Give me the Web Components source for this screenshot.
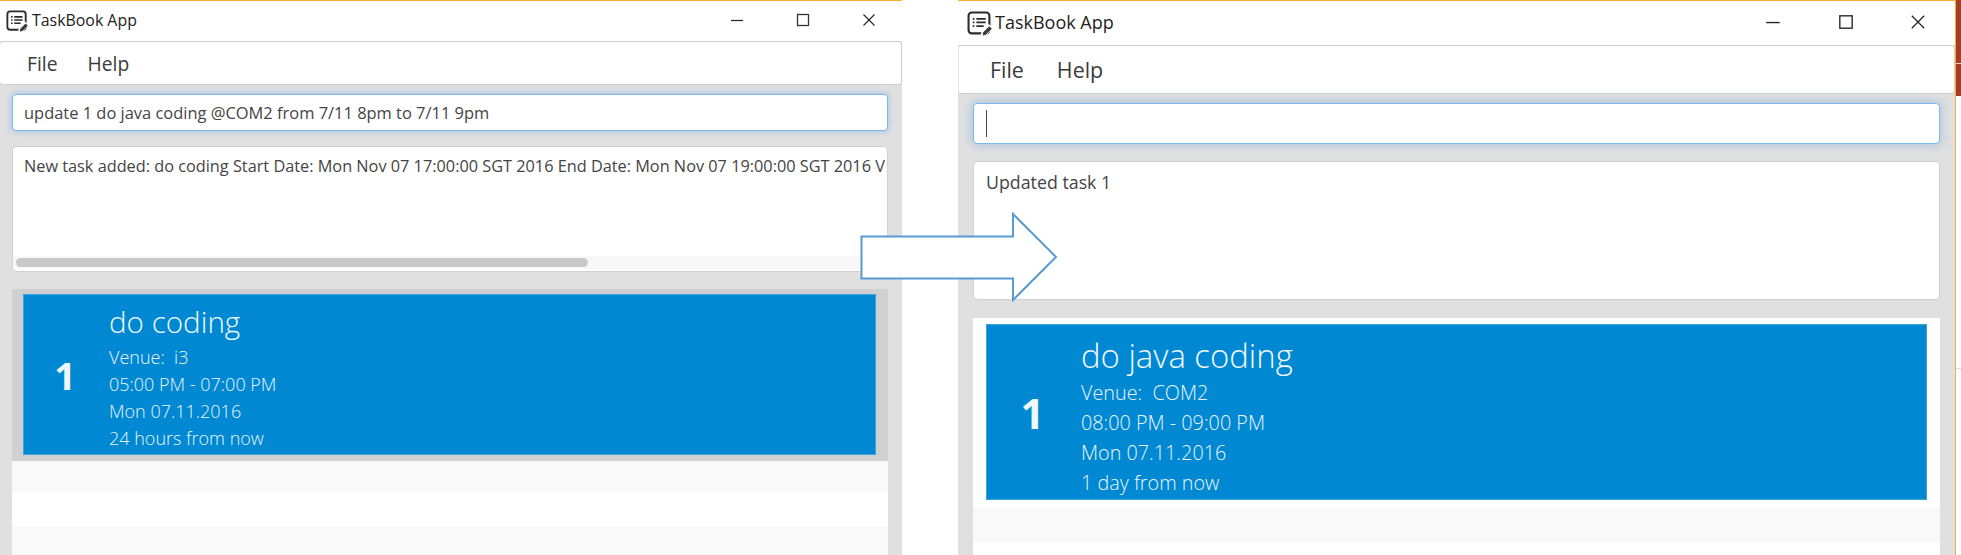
<!DOCTYPE html>
<html>
<head>
<meta charset="utf-8">
<title>TaskBook App</title>
<style>
    html, body { margin: 0; height: 100%; background: #fff; overflow: hidden; }
    body { font-family: "Open Sans", "Noto Sans", sans-serif; }
    #stage { display: flex; gap: 56px; width: 1961px; height: 555px; }
    #stage wood-strip { margin-left: -56px; }
</style>
</head>
<body>

<template id="window-tpl">
    <style>
        :host {
            display: flex;
            flex-direction: column;
            flex: none;
            width: 902px;
            height: 555px;
            box-sizing: border-box;
            border-top: 1px solid #f5ad33;
            background: #e0e0e0;
            color: #3a3a3a;
            --pad: 12px;
            --title-h: 40px;
            --menu-h: 44px;
            overflow: hidden;
        }
        :host([large]) {
            width: 998px;
            --pad: 15px;
            --title-h: 44px;
            --menu-h: 49px;
            border-right: 1px solid #f5ad33;
        }
        .title {
            height: var(--title-h);
            flex: none;
            background: #fff;
            display: flex;
            align-items: center;
            padding-left: 6px;
            color: #222;
            font-size: 15.9px;
        }
        :host([large]) .title { padding-left: 9px; font-size: 18px; }
        .title svg.logo { width: 22px; height: 22px; margin-right: 4px; flex: none; }
        :host([large]) .title svg.logo { width: 25px; height: 25px; margin-right: 3px; }
        .title .name { flex: 1; padding-bottom: 2px; }
        .controls { display: flex; align-items: center; gap: 50px; padding-right: 25px; margin-bottom: 2px; }
        .controls svg { display: block; width: 16px; height: 16px; }
        :host([large]) .controls { gap: 54.5px; padding-right: 28px; }
        :host([large]) .controls svg { width: 18px; height: 18px; }
        .menu {
            height: var(--menu-h);
            flex: none;
            box-sizing: border-box;
            background: #fff;
            border: 1px solid #cfcfcf;
            border-left: 0;
            border-radius: 4px;
            display: flex;
            align-items: center;
            gap: 30px;
            padding-left: 27px;
            font-size: 19.3px;
        }
        :host([large]) .menu { padding-left: 31px; gap: 33px; font-size: 21.4px; border-left: 1px solid #e4e4e4; }
        .body {
            flex: 1;
            min-height: 0;
            display: flex;
            flex-direction: column;
            padding: 9px 14px 0 var(--pad);
        }
        :host([large]) .body { padding-right: 15px; }
    </style>
    <div class="title">
        <svg class="logo" viewBox="0 0 24 24" fill="none">
            <rect x="1.5" y="1.5" width="20" height="20" rx="3" stroke="#2b2b2b" stroke-width="2"/>
            <path d="M5.5 7.5h1.6M5.5 11h1.6M5.5 14.5h1.6M9 7.5h9M9 11h9M9 14.5h7" stroke="#2b2b2b" stroke-width="1.7"/>
            <path d="M13 24l1-4.5 7-7 4 4-7 7.5z" fill="#fff"/>
            <path d="M15 23.5l.6-3 5.8-5.8 2.4 2.4-5.8 5.8z" fill="#3a3a3a"/>
        </svg>
        <span class="name"><slot name="title"></slot></span>
        <div class="controls">
            <svg viewBox="0 0 16 16"><path d="M2 8.5h12" stroke="#222" stroke-width="1.2"/></svg>
            <svg viewBox="0 0 16 16"><rect x="2.5" y="2.5" width="11" height="11" fill="none" stroke="#333" stroke-width="1.3"/></svg>
            <svg viewBox="0 0 16 16"><path d="M2.5 2.5l11 11M13.5 2.5l-11 11" stroke="#222" stroke-width="1.1"/></svg>
        </div>
    </div>
    <div class="menu"><slot name="menu"></slot></div>
    <div class="body"><slot></slot></div>
</template>

<template id="input-tpl">
    <style>
        :host {
            display: flex;
            align-items: center;
            flex: none;
            box-sizing: border-box;
            height: 37px;
            background: #fff;
            border: 1px solid #7ab8ee;
            border-radius: 4px;
            box-shadow: 0 0 6px 1px rgba(122, 184, 238, .55);
            padding: 0 12px 0 11px;
            font-size: 16.45px;
            color: #444;
            white-space: nowrap;
        }
        :host([large]) { height: 41px; box-shadow: 0 0 10px 2px rgba(122, 170, 220, .45); }
    </style>
    <slot></slot>
</template>

<template id="result-tpl">
    <style>
        :host {
            display: block;
            flex: none;
            position: relative;
            box-sizing: border-box;
            height: 126px;
            margin-top: 15px;
            background: #fff;
            border: 1px solid #d2d2d2;
            border-radius: 5px;
            padding: 9px 0 0 11px;
            font-size: 16.3px;
            line-height: 20px;
            color: #444;
            white-space: nowrap;
            overflow: hidden;
        }
        :host([large]) { height: 139px; margin-top: 17px; padding: 10px 0 0 12px; font-size: 17.8px; }
        .track {
            position: absolute;
            left: 0; right: 0; bottom: 2px;
            height: 13px;
            background: #f8f8f8;
        }
        .thumb {
            position: absolute;
            left: 3px; top: 2px;
            width: 572px; height: 9px;
            border-radius: 5px;
            background: #c8c8c8;
        }
        :host(:not([scroll])) .track { display: none; }
    </style>
    <slot></slot>
    <div class="track"><div class="thumb"></div></div>
</template>

<template id="list-tpl">
    <style>
        :host {
            display: flex;
            flex-direction: column;
            flex: 1;
            min-height: 0;
            margin-top: 17px;
            background: #fff;
            overflow: hidden;
        }
        :host([large]) { margin-top: 18px; }
        .rows { flex: 1; background: repeating-linear-gradient(#f9f9f9 0 32px, #fff 32px 65px); }
        :host([large]) .rows { background: repeating-linear-gradient(#f9f9f9 0 35px, #fff 35px 70px); }
    </style>
    <slot></slot>
    <div class="rows"></div>
</template>

<template id="card-tpl">
    <style>
        :host {
            display: block;
            flex: none;
            background: #d0d0d0;
            padding: 5px 12px 6px 11px;
        }
        :host([large]) { background: #fff; padding: 6px 13px 7px 13px; }
        .card {
            display: flex;
            align-items: center;
            box-sizing: border-box;
            height: 161px;
            background: #0088d2;
            border: 1px solid #3aa6e0;
            color: #e8f5fc;
        }
        :host([large]) .card { height: 176px; }
        .num {
            width: 85px;
            flex: none;
            text-align: center;
            font-size: 38px;
            font-weight: 700;
            padding-right: 3px;
            box-sizing: border-box;
            color: #eef8fd;
        }
        :host([large]) .num { width: 94px; font-size: 42px; }
        .lines { display: flex; flex-direction: column; align-self: flex-start; padding-top: 8px; }
        :host([large]) .lines { padding-top: 9px; }
        .head { font-size: 29.6px; line-height: 38px; margin-bottom: 3px; font-weight: 300; color: #f0f9fe; }
        :host([large]) .head { font-size: 32.9px; line-height: 44px; margin-bottom: 0; }
        .line { font-size: 18px; line-height: 27px; font-weight: 300; }
        :host([large]) .line { font-size: 19.8px; line-height: 30px; }
    </style>
    <div class="card">
        <div class="num"><slot name="num"></slot></div>
        <div class="lines">
            <div class="head"><slot name="head"></slot></div>
            <div class="line"><slot name="venue"></slot></div>
            <div class="line"><slot name="time"></slot></div>
            <div class="line"><slot name="date"></slot></div>
            <div class="line"><slot name="rel"></slot></div>
        </div>
    </div>
</template>

<template id="arrow-tpl">
    <style>
        :host { display: block; position: absolute; left: 860px; top: 212px; width: 200px; height: 90px; }
        svg { display: block; }
    </style>
    <svg width="200" height="90" viewBox="0 0 200 90">
        <path d="M1.5 24.5H153V2l43 43-43 43V66.5H1.5z" fill="#fff" stroke="#5b9bd5" stroke-width="2"/>
    </svg>
</template>

<template id="wood-tpl">
    <style>
        :host { display: block; flex: 1; height: 555px; background: #fff; }
        .w { height: 96px; background: linear-gradient(#a63d1e 0 63px, #e9d5cc 63px 64px, #a63d1e 64px); }
        .r { height: 272px; border-bottom: 1px solid #dcdcdc; }
    </style>
    <div class="w"></div>
    <div class="r"></div>
</template>

<div id="stage">
    <task-window>
        <span slot="title">TaskBook App</span>
        <menu-item slot="menu">File</menu-item>
        <menu-item slot="menu">Help</menu-item>
        <command-box>update 1 do java coding @COM2 from 7/11 8pm to 7/11 9pm</command-box>
        <result-box scroll>New task added: do coding Start Date: Mon Nov 07 17:00:00 SGT 2016 End Date: Mon Nov 07 19:00:00 SGT 2016 V</result-box>
        <task-list>
            <task-card>
                <span slot="num">1</span>
                <span slot="head">do coding</span>
                <span slot="venue">Venue:&nbsp; i3</span>
                <span slot="time">05:00 PM - 07:00 PM</span>
                <span slot="date">Mon 07.11.2016</span>
                <span slot="rel">24 hours from now</span>
            </task-card>
        </task-list>
    </task-window>

    <task-window large>
        <span slot="title">TaskBook App</span>
        <menu-item slot="menu">File</menu-item>
        <menu-item slot="menu">Help</menu-item>
        <command-box large><span style="width:1px;height:27px;background:#444;display:block;margin-left:1px"></span></command-box>
        <result-box large>Updated task 1</result-box>
        <task-list large>
            <task-card large>
                <span slot="num">1</span>
                <span slot="head">do java coding</span>
                <span slot="venue">Venue:&nbsp; COM2</span>
                <span slot="time">08:00 PM - 09:00 PM</span>
                <span slot="date">Mon 07.11.2016</span>
                <span slot="rel">1 day from now</span>
            </task-card>
        </task-list>
    </task-window>

    <wood-strip></wood-strip>
</div>
<flow-arrow></flow-arrow>

<script>
    //every element clones its template into an open shadow root
    function fromTemplate(tplId) {
        return class extends HTMLElement {
            constructor() {
                super();
                this.attachShadow({ mode: "open" });
                this.shadowRoot.appendChild(document.getElementById(tplId).content.cloneNode(true));
            }
        };
    }

    class MenuItem extends HTMLElement {
        constructor() {
            super();
            this.attachShadow({ mode: "open" });
            this.shadowRoot.innerHTML = `<style>:host { display: block; }</style><slot></slot>`;
        }
    }

    customElements.define("task-window", fromTemplate("window-tpl"));
    customElements.define("command-box", fromTemplate("input-tpl"));
    customElements.define("result-box", fromTemplate("result-tpl"));
    customElements.define("task-list", fromTemplate("list-tpl"));
    customElements.define("task-card", fromTemplate("card-tpl"));
    customElements.define("flow-arrow", fromTemplate("arrow-tpl"));
    customElements.define("wood-strip", fromTemplate("wood-tpl"));
    customElements.define("menu-item", MenuItem);
</script>
</body>
</html>
